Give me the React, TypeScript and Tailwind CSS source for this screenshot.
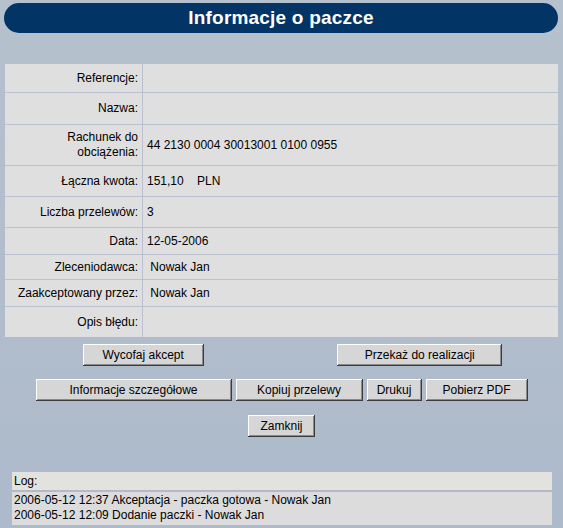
import React from 'react';

type Row = { label: React.ReactNode; value?: React.ReactNode; h: string };

const rows: Row[] = [
  { label: 'Referencje:', h: 'h-[29px]' },
  { label: 'Nazwa:', h: 'h-[32px]' },
  {
    label: (
      <>
        Rachunek do
        <br />
        obciążenia:
      </>
    ),
    value: '44 2130 0004 30013001 0100 0955',
    h: 'h-[41px]',
  },
  { label: 'Łączna kwota:', value: '151,10\u00a0\u00a0\u00a0 PLN', h: 'h-[31px]' },
  { label: 'Liczba przelewów:', value: '3', h: 'h-[31px]' },
  { label: 'Data:', value: '12-05-2006', h: 'h-[27px]' },
  { label: 'Zleceniodawca:', value: '\u00a0Nowak Jan', h: 'h-[25px]' },
  { label: 'Zaakceptowany przez:', value: '\u00a0Nowak Jan', h: 'h-[27px]' },
  { label: 'Opis błędu:', h: 'h-[30px]' },
];

function Btn({ children, w }: { children: React.ReactNode; w: string }) {
  return (
    <button
      className={`${w} h-[22px] bg-[#d6d6d6] text-[12px] text-black leading-none shadow-[inset_-1px_-1px_#3c3c3c,inset_1px_1px_#ffffff,inset_-2px_-2px_#8a8a8a]`}
    >
      {children}
    </button>
  );
}

export default function App() {
  return (
    <div
      className="min-h-[528px] w-full bg-gradient-to-b from-[#b6c1ce] to-[#adbacb] pt-[3px] text-black"
      style={{ fontFamily: '"Liberation Sans", Arial, sans-serif' }}
    >
      {/* header */}
      <div className="ml-[4px] mr-[5px] h-[30px] rounded-full bg-[#023466] flex items-center justify-center">
        <h1 className="text-white font-bold text-[19px] tracking-[0.2px]">Informacje o paczce</h1>
      </div>

      {/* details table */}
      <div className="mx-[5px] mt-[31px] bg-[#dfdfdf] text-[12px]">
        {rows.map((row, i) => (
          <div
            key={i}
            className={`grid grid-cols-[138px_1fr] ${row.h} ${
              i < rows.length - 1 ? 'border-b border-[#bcc1d2]' : ''
            }`}
          >
            <div className="flex items-center justify-end text-right pr-[4px] border-r border-[#bcc1d2] leading-[15px]">
              {row.label}
            </div>
            <div className="flex items-center pl-[4px] whitespace-pre">{row.value}</div>
          </div>
        ))}
      </div>

      {/* buttons */}
      <div className="mx-[5px] mt-[7px] grid grid-cols-2">
        <div className="flex justify-center">
          <Btn w="w-[121px]">Wycofaj akcept</Btn>
        </div>
        <div className="flex justify-center">
          <Btn w="w-[165px]">Przekaż do realizacji</Btn>
        </div>
      </div>

      <div className="mt-[13px] flex justify-center gap-[4px]">
        <Btn w="w-[196px]">Informacje szczegółowe</Btn>
        <Btn w="w-[127px]">Kopiuj przelewy</Btn>
        <Btn w="w-[55px]">Drukuj</Btn>
        <Btn w="w-[102px]">Pobierz PDF</Btn>
      </div>

      <div className="mt-[14px] flex justify-center">
        <Btn w="w-[67px]">Zamknij</Btn>
      </div>

      {/* log */}
      <div className="ml-[12px] mr-[11px] mt-[35px] bg-[#dcdcdc] text-[12px]">
        <div className="h-[18px] bg-[#e2e2de] pl-[2px] flex items-center">Log:</div>
        <div className="h-[2px] bg-[#b6b8c6]" />
        <div className="pl-[2px] pt-[1px] pb-[2px] leading-[15px]">
          <div>2006-05-12 12:37 Akceptacja - paczka gotowa - Nowak Jan</div>
          <div>2006-05-12 12:09 Dodanie paczki - Nowak Jan</div>
        </div>
      </div>
    </div>
  );
}
